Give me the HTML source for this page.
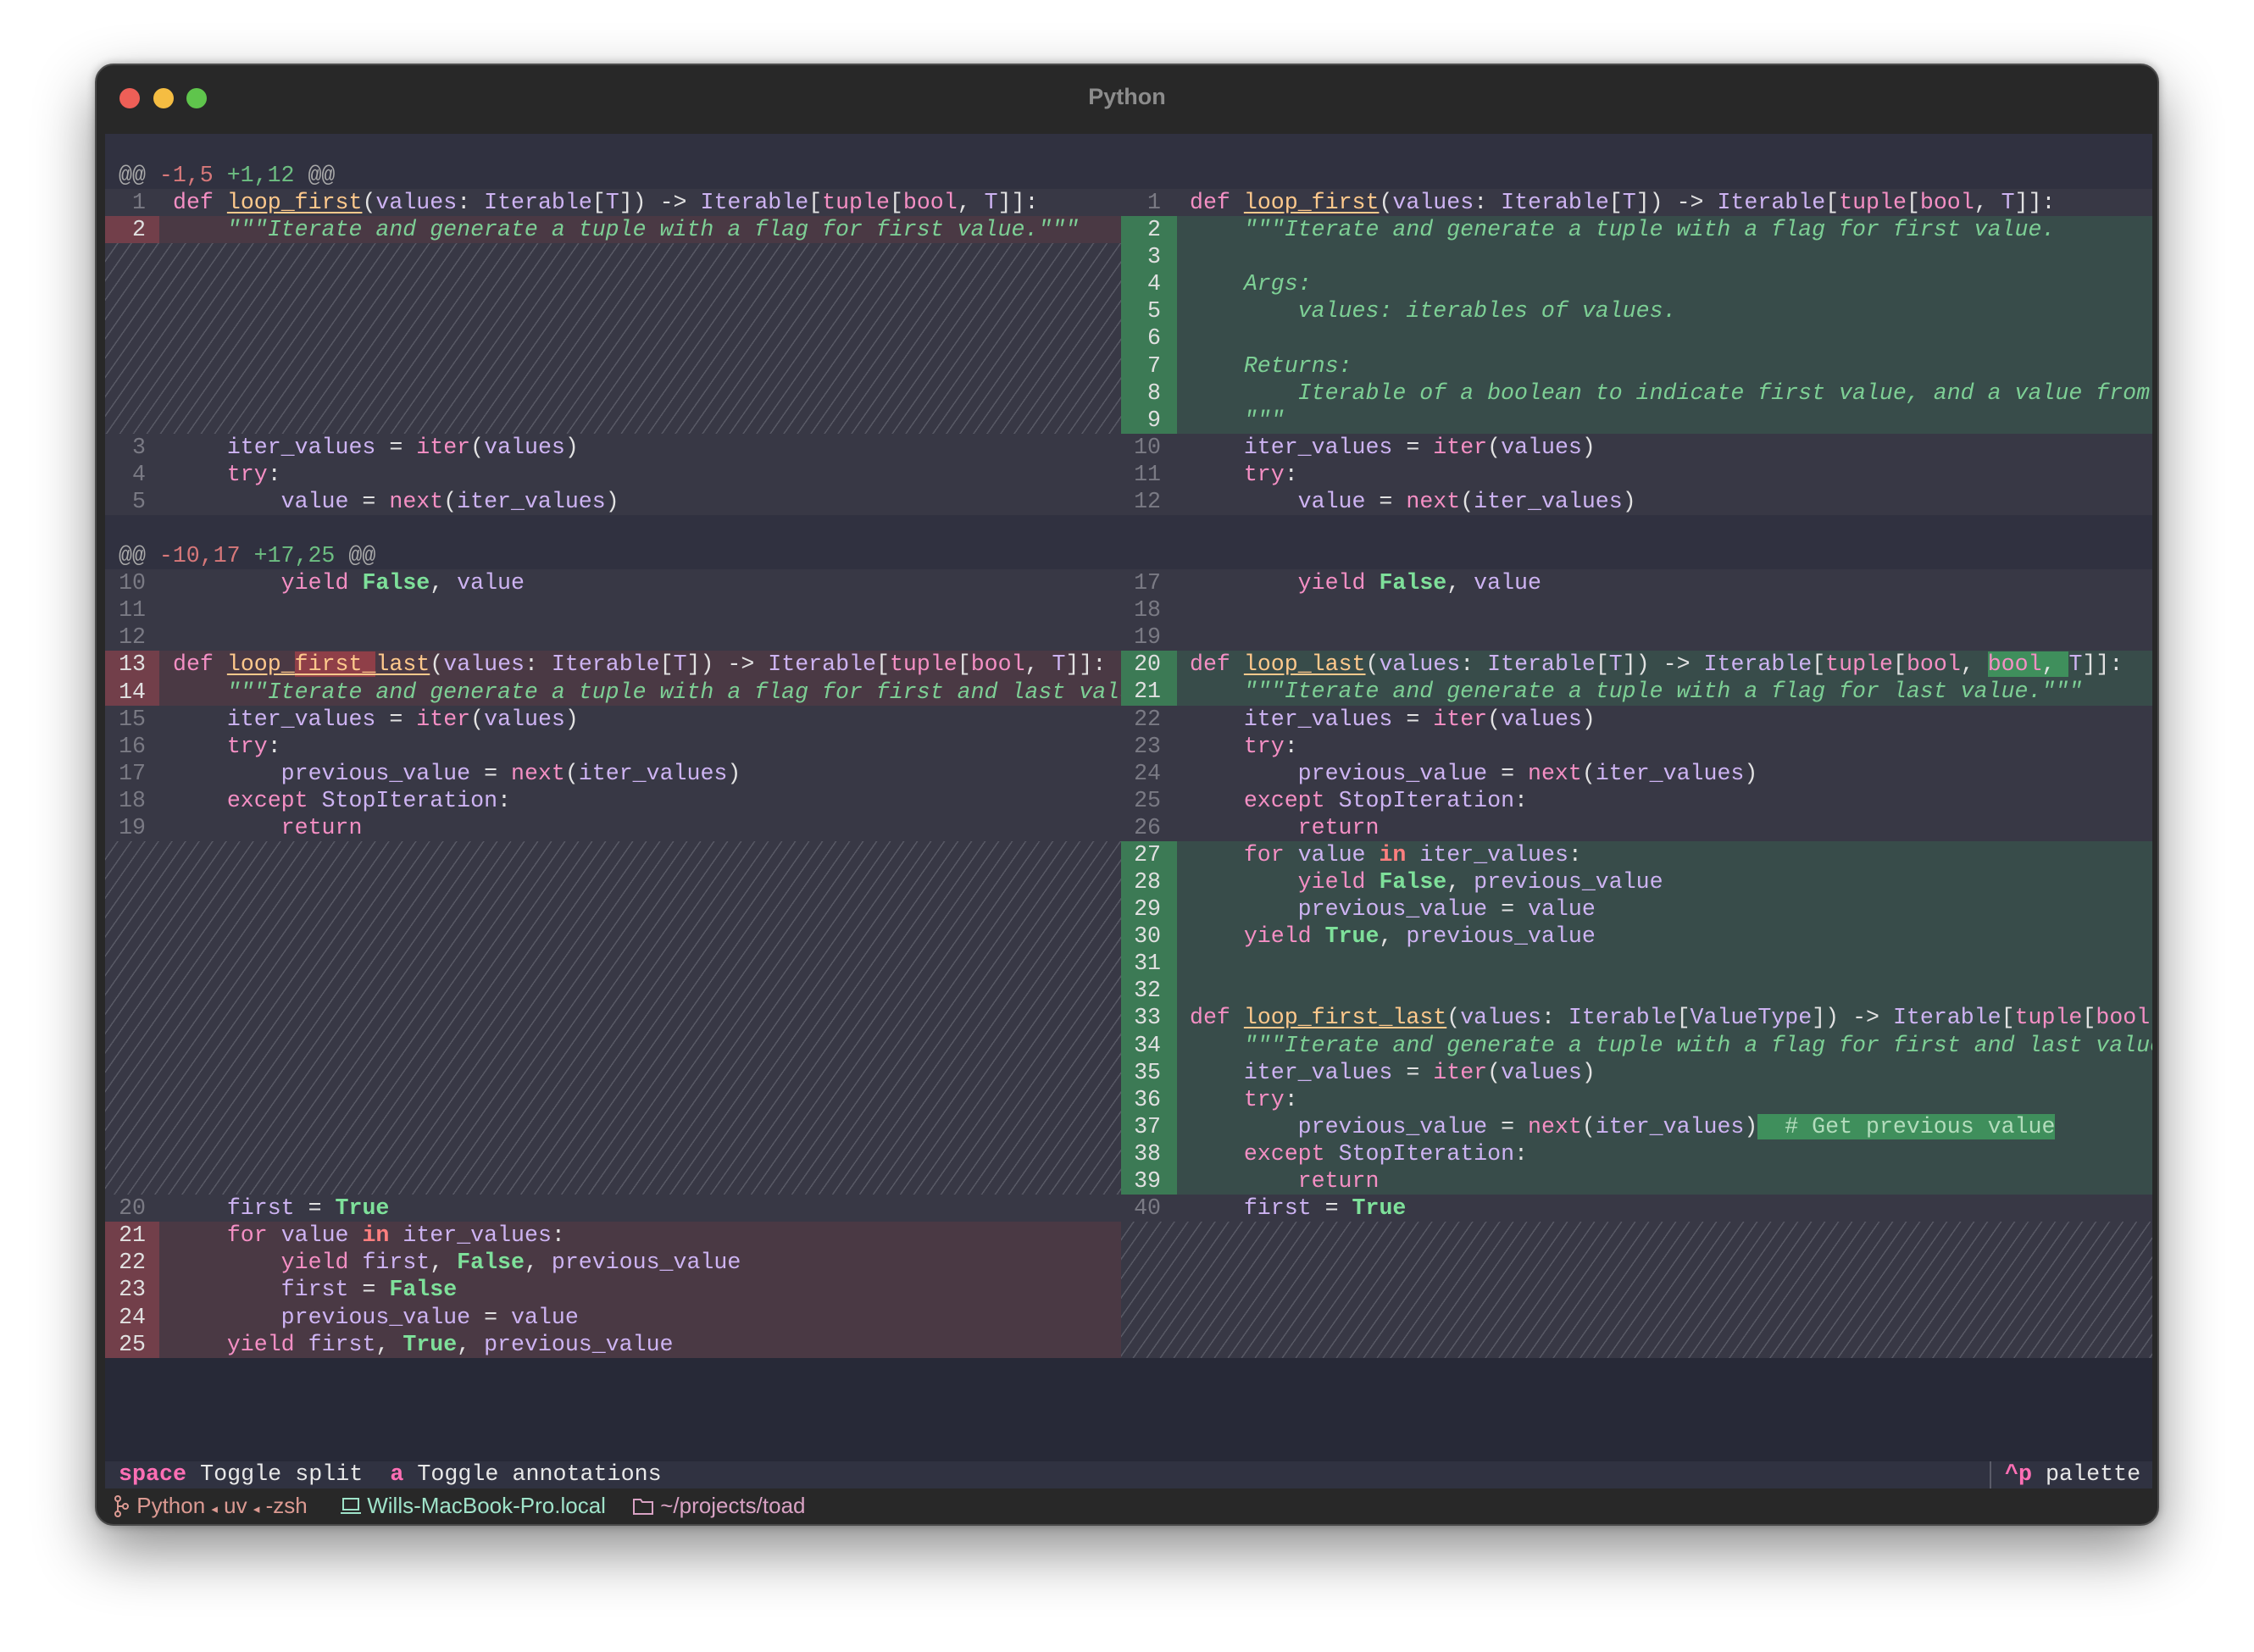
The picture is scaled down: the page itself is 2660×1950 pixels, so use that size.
<!DOCTYPE html>
<html><head><meta charset="utf-8"><style>
*{margin:0;padding:0;box-sizing:border-box}
body{width:2660px;height:1950px;background:#fff;position:relative;overflow:hidden;font-family:"Liberation Mono",monospace}
.win{position:absolute;left:112px;top:75px;width:2436px;height:1726px;background:#282828;border-radius:22px;border:2px solid #4a4a4a;box-shadow:0 30px 70px rgba(0,0,0,.45),0 0 10px rgba(0,0,0,.3);overflow:hidden}
.dot{position:absolute;top:27px;width:24px;height:24px;border-radius:50%}
.title{position:absolute;top:22px;left:0;width:100%;text-align:center;font:bold 27px "Liberation Sans",sans-serif;color:#8c8c8c}
.content{position:absolute;left:10px;top:81px;width:2416px;height:1567px;background:#272937}
.top{position:absolute;left:0;top:0;width:2416px;height:1444px;background:#303140}
.pane{position:absolute;top:33px;overflow:hidden;font-size:26.6px}
.L{left:0;width:1199px}
.R{left:1199px;width:1217px}
.row{height:32.09px;line-height:32.09px;display:flex;white-space:pre;background:#383845}
.row.e{background:transparent}
.g{flex:none;text-align:right;color:#7a7a84}
.L .g{width:64px;padding-right:16px}
.R .g{width:66px;padding-right:19px}
.cd{padding-left:16px;color:#e2e2e2}
.R .cd{padding-left:15px}
.d{background:#4a3944}.d .g{background:#723f4a;color:#e0e0e0}
.a{background:#384c4a}.a .g{background:#3c7a55;color:#e0e0e0}
.h{background:#383845 repeating-linear-gradient(125deg,transparent 0 11.6px,#585965 11.6px 13.1px)}
.k{color:#f48fc4}.f{color:#ffc98c;text-decoration:underline;text-underline-offset:4px}
.n{color:#cdb3f2}.s{color:#7dcf95;font-style:italic}.c{color:#7ee09a;font-weight:bold}
.r{color:#ff7f7f;font-weight:bold}
.hd{color:#a8a8a8}.hm{color:#d7787a}.hp{color:#6dbe82}
.xd{background:#8f3f48}.xa{background:#3f8f5c}
.cm{background:#3f8f5c;color:#b3dcbc}
.status{position:absolute;left:10px;top:1648px;width:2416px;height:32px;background:#303241;font-size:26.7px;line-height:32px;color:#e8e8e8;white-space:pre}
.foot{position:absolute;top:1685px;font:26px "Liberation Sans",sans-serif;white-space:pre}
</style></head><body>
<div class="win">
<div class="dot" style="left:27px;background:#ee5f57"></div>
<div class="dot" style="left:67px;background:#f5bd42"></div>
<div class="dot" style="left:106px;background:#5fc54c"></div>
<div class="title">Python</div>
<div class="content">
<div class="top"></div>
<div class="pane L">
<div class="row e"><span class="cd" style="padding-left:16px"><span class="hd">@@</span> <span class="hm">-1,5</span> <span class="hp">+1,12</span> <span class="hd">@@</span></span></div>
<div class="row"><span class="g">1</span><span class="cd"><span class="k">def</span> <span class="f">loop_first</span>(<span class="n">values</span>: <span class="n">Iterable</span>[<span class="n">T</span>]) -&gt; <span class="n">Iterable</span>[<span class="k">tuple</span>[<span class="k">bool</span>, <span class="n">T</span>]]:</span></div>
<div class="row d"><span class="g">2</span><span class="cd s">    """Iterate and generate a tuple with a flag for first value."""</span></div>
<div class="h" style="height:224.6px"></div>
<div class="row"><span class="g">3</span><span class="cd">    <span class="n">iter_values</span> = <span class="k">iter</span>(<span class="n">values</span>)</span></div>
<div class="row"><span class="g">4</span><span class="cd">    <span class="k">try</span>:</span></div>
<div class="row"><span class="g">5</span><span class="cd">        <span class="n">value</span> = <span class="k">next</span>(<span class="n">iter_values</span>)</span></div>
<div class="row e"></div>
<div class="row e"><span class="cd"><span class="hd">@@</span> <span class="hm">-10,17</span> <span class="hp">+17,25</span> <span class="hd">@@</span></span></div>
<div class="row"><span class="g">10</span><span class="cd">        <span class="k">yield</span> <span class="c">False</span>, <span class="n">value</span></span></div>
<div class="row"><span class="g">11</span><span class="cd"></span></div>
<div class="row"><span class="g">12</span><span class="cd"></span></div>
<div class="row d"><span class="g">13</span><span class="cd"><span class="k">def</span> <span class="f">loop_<span class="xd">first_</span>last</span>(<span class="n">values</span>: <span class="n">Iterable</span>[<span class="n">T</span>]) -&gt; <span class="n">Iterable</span>[<span class="k">tuple</span>[<span class="k">bool</span>, <span class="n">T</span>]]:</span></div>
<div class="row d"><span class="g">14</span><span class="cd s">    """Iterate and generate a tuple with a flag for first and last value."""</span></div>
<div class="row"><span class="g">15</span><span class="cd">    <span class="n">iter_values</span> = <span class="k">iter</span>(<span class="n">values</span>)</span></div>
<div class="row"><span class="g">16</span><span class="cd">    <span class="k">try</span>:</span></div>
<div class="row"><span class="g">17</span><span class="cd">        <span class="n">previous_value</span> = <span class="k">next</span>(<span class="n">iter_values</span>)</span></div>
<div class="row"><span class="g">18</span><span class="cd">    <span class="k">except</span> <span class="n">StopIteration</span>:</span></div>
<div class="row"><span class="g">19</span><span class="cd">        <span class="k">return</span></span></div>
<div class="h" style="height:417.2px"></div>
<div class="row"><span class="g">20</span><span class="cd">    <span class="n">first</span> = <span class="c">True</span></span></div>
<div class="row d"><span class="g">21</span><span class="cd">    <span class="k">for</span> <span class="n">value</span> <span class="r">in</span> <span class="n">iter_values</span>:</span></div>
<div class="row d"><span class="g">22</span><span class="cd">        <span class="k">yield</span> <span class="n">first</span>, <span class="c">False</span>, <span class="n">previous_value</span></span></div>
<div class="row d"><span class="g">23</span><span class="cd">        <span class="n">first</span> = <span class="c">False</span></span></div>
<div class="row d"><span class="g">24</span><span class="cd">        <span class="n">previous_value</span> = <span class="n">value</span></span></div>
<div class="row d"><span class="g">25</span><span class="cd">    <span class="k">yield</span> <span class="n">first</span>, <span class="c">True</span>, <span class="n">previous_value</span></span></div>
</div>
<div class="pane R">
<div class="row e"></div>
<div class="row"><span class="g">1</span><span class="cd"><span class="k">def</span> <span class="f">loop_first</span>(<span class="n">values</span>: <span class="n">Iterable</span>[<span class="n">T</span>]) -&gt; <span class="n">Iterable</span>[<span class="k">tuple</span>[<span class="k">bool</span>, <span class="n">T</span>]]:</span></div>
<div class="row a"><span class="g">2</span><span class="cd s">    """Iterate and generate a tuple with a flag for first value.</span></div>
<div class="row a"><span class="g">3</span><span class="cd s"></span></div>
<div class="row a"><span class="g">4</span><span class="cd s">    Args:</span></div>
<div class="row a"><span class="g">5</span><span class="cd s">        values: iterables of values.</span></div>
<div class="row a"><span class="g">6</span><span class="cd s"></span></div>
<div class="row a"><span class="g">7</span><span class="cd s">    Returns:</span></div>
<div class="row a"><span class="g">8</span><span class="cd s">        Iterable of a boolean to indicate first value, and a value from the iterable.</span></div>
<div class="row a"><span class="g">9</span><span class="cd s">    """</span></div>
<div class="row"><span class="g">10</span><span class="cd">    <span class="n">iter_values</span> = <span class="k">iter</span>(<span class="n">values</span>)</span></div>
<div class="row"><span class="g">11</span><span class="cd">    <span class="k">try</span>:</span></div>
<div class="row"><span class="g">12</span><span class="cd">        <span class="n">value</span> = <span class="k">next</span>(<span class="n">iter_values</span>)</span></div>
<div class="row e"></div>
<div class="row e"></div>
<div class="row"><span class="g">17</span><span class="cd">        <span class="k">yield</span> <span class="c">False</span>, <span class="n">value</span></span></div>
<div class="row"><span class="g">18</span><span class="cd"></span></div>
<div class="row"><span class="g">19</span><span class="cd"></span></div>
<div class="row a"><span class="g">20</span><span class="cd"><span class="k">def</span> <span class="f">loop_last</span>(<span class="n">values</span>: <span class="n">Iterable</span>[<span class="n">T</span>]) -&gt; <span class="n">Iterable</span>[<span class="k">tuple</span>[<span class="k">bool</span>, <span class="xa"><span class="k">bool</span>, </span><span class="n">T</span>]]:</span></div>
<div class="row a"><span class="g">21</span><span class="cd s">    """Iterate and generate a tuple with a flag for last value."""</span></div>
<div class="row"><span class="g">22</span><span class="cd">    <span class="n">iter_values</span> = <span class="k">iter</span>(<span class="n">values</span>)</span></div>
<div class="row"><span class="g">23</span><span class="cd">    <span class="k">try</span>:</span></div>
<div class="row"><span class="g">24</span><span class="cd">        <span class="n">previous_value</span> = <span class="k">next</span>(<span class="n">iter_values</span>)</span></div>
<div class="row"><span class="g">25</span><span class="cd">    <span class="k">except</span> <span class="n">StopIteration</span>:</span></div>
<div class="row"><span class="g">26</span><span class="cd">        <span class="k">return</span></span></div>
<div class="row a"><span class="g">27</span><span class="cd">    <span class="k">for</span> <span class="n">value</span> <span class="r">in</span> <span class="n">iter_values</span>:</span></div>
<div class="row a"><span class="g">28</span><span class="cd">        <span class="k">yield</span> <span class="c">False</span>, <span class="n">previous_value</span></span></div>
<div class="row a"><span class="g">29</span><span class="cd">        <span class="n">previous_value</span> = <span class="n">value</span></span></div>
<div class="row a"><span class="g">30</span><span class="cd">    <span class="k">yield</span> <span class="c">True</span>, <span class="n">previous_value</span></span></div>
<div class="row a"><span class="g">31</span><span class="cd"></span></div>
<div class="row a"><span class="g">32</span><span class="cd"></span></div>
<div class="row a"><span class="g">33</span><span class="cd"><span class="k">def</span> <span class="f">loop_first_last</span>(<span class="n">values</span>: <span class="n">Iterable</span>[<span class="n">ValueType</span>]) -&gt; <span class="n">Iterable</span>[<span class="k">tuple</span>[<span class="k">bool</span>, <span class="k">bool</span>, <span class="n">ValueType</span>]]:</span></div>
<div class="row a"><span class="g">34</span><span class="cd s">    """Iterate and generate a tuple with a flag for first and last value."""</span></div>
<div class="row a"><span class="g">35</span><span class="cd">    <span class="n">iter_values</span> = <span class="k">iter</span>(<span class="n">values</span>)</span></div>
<div class="row a"><span class="g">36</span><span class="cd">    <span class="k">try</span>:</span></div>
<div class="row a"><span class="g">37</span><span class="cd">        <span class="n">previous_value</span> = <span class="k">next</span>(<span class="n">iter_values</span>)<span class="cm">  # Get previous value</span></span></div>
<div class="row a"><span class="g">38</span><span class="cd">    <span class="k">except</span> <span class="n">StopIteration</span>:</span></div>
<div class="row a"><span class="g">39</span><span class="cd">        <span class="k">return</span></span></div>
<div class="row"><span class="g">40</span><span class="cd">    <span class="n">first</span> = <span class="c">True</span></span></div>
<div class="h" style="height:160.5px"></div>
</div>
</div>
<div class="status"><span style="padding-left:16px;color:#ff6fb5;font-weight:bold">space</span> Toggle split  <span style="color:#ff6fb5;font-weight:bold">a</span> Toggle annotations<span style="position:absolute;left:2224px;top:0;height:32px;border-left:2px solid #5a5b68"></span><span style="position:absolute;left:2242px;top:0"><span style="color:#ff6fb5;font-weight:bold">^p</span> palette</span></div>
<div class="foot" style="left:20px;color:#dc9a92"><svg width="20" height="26" viewBox="0 0 20 26" style="vertical-align:-5px"><g fill="none" stroke="#dc9a92" stroke-width="2"><circle cx="5" cy="4" r="3"/><circle cx="14" cy="13" r="3"/><circle cx="5" cy="22" r="3"/><path d="M5 7v12M5 13h6"/></g></svg> Python <span style="font-size:15px">◂</span> uv <span style="font-size:15px">◂</span> -zsh</div>
<div class="foot" style="left:288px;color:#9fe3c9"><svg width="24" height="22" viewBox="0 0 24 22" style="vertical-align:-3px"><g fill="none" stroke="#9fe3c9" stroke-width="2"><rect x="3" y="2" width="18" height="13"/><path d="M0 19h24"/></g></svg> Wills-MacBook-Pro.local</div>
<div class="foot" style="left:632px;color:#d9a2c4"><svg width="26" height="22" viewBox="0 0 26 22" style="vertical-align:-3px"><path d="M2 3h8l2 3h12v14H2z" fill="none" stroke="#d9a2c4" stroke-width="2"/></svg> ~/projects/toad</div>
</div>
</body></html>
